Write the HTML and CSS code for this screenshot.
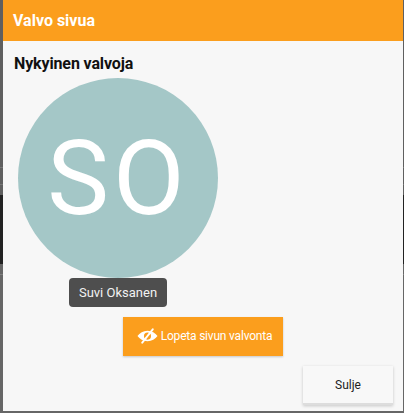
FILE: index.html
```html
<!DOCTYPE html>
<html lang="fi">

<head>
    <meta charset="UTF-8">
    <meta name="viewport" content="width=device-width, initial-scale=1.0">
    <title>Valvo sivua</title>
    <link rel="stylesheet" href="styles.css">
</head>

<body>
    <div class="dialog">
        <header class="dialog-header">
            <h1 class="dialog-title">Valvo sivua</h1>
        </header>

        <div class="dialog-body">
            <h2 class="section-title">Nykyinen valvoja</h2>

            <div class="avatar">SO</div>
            <div class="name-tag">Suvi Oksanen</div>

            <button type="button" class="stop-btn">
                <svg class="stop-icon" viewBox="0 0 22 16" aria-hidden="true">
                    <path fill="currentColor" fill-rule="evenodd" d="M11 2.500C6.500 2.500 2.800 4.800 0.500 8c2.300 3.200 6 5.500 10.500 5.500S19.200 11.200 21.500 8C19.200 4.800 15.500 2.500 11 2.500zm0 1.900a3.700 3.700 0 1 1 0 7.400 3.700 3.700 0 0 1 0-7.400z"/>
                    <path fill="none" stroke="currentColor" stroke-width="2" stroke-linecap="round" d="M16.500 1 5.500 15"/>
                </svg>
                Lopeta sivun valvonta
            </button>
        </div>

        <footer class="dialog-footer">
            <button type="button" class="close-btn">Sulje</button>
        </footer>
    </div>
</body>

</html>
```

FILE: styles.css
```css
* {
    margin: 0;
    padding: 0;
    box-sizing: border-box;
}

html,
body {
    height: 100%;
    overflow: hidden;
}

body {
    font-family: Roboto, "Liberation Sans", sans-serif;
    background: linear-gradient(#5f5f5f 0, #5f5f5f 167px, #777 167px, #777 168px, #5f5f5f 168px, #5f5f5f 184px, #777 184px, #777 185px, #5f5f5f 185px, #5f5f5f 195px, #222 195px, #222 264px, #666 264px, #666 274px, #808080 274px, #808080 275px, #666 275px);
    padding: 0 1px 2px 3px;
}

.dialog {
    height: 411px;
    background: #f7f7f7;
    display: flex;
    flex-direction: column;
}

.dialog-header {
    height: 41px;
    background: #fb9e1d;
    padding: 0 10px;
    display: flex;
    align-items: center;
}

.dialog-title {
    font-size: 16px;
    font-weight: 700;
    color: #fff;
}

.dialog-body {
    flex: 1;
    padding: 13px 11px 0;
}

.section-title {
    font-size: 16px;
    font-weight: 700;
    line-height: 20px;
    letter-spacing: -0.13px;
    color: #111;
}

.avatar {
    width: 200px;
    height: 200px;
    margin: 4px 0 0 4px;
    border-radius: 50%;
    background: #a4c7c7;
    color: #fff;
    font-size: 104px;
    font-weight: 400;
    letter-spacing: 4px;
    display: flex;
    align-items: center;
    justify-content: center;
}

.name-tag {
    width: 98px;
    height: 29px;
    margin-left: 55px;
    background: #4e4e4e;
    border-radius: 4px;
    color: #f2f2f2;
    font-size: 13px;
    display: flex;
    align-items: center;
    justify-content: center;
}

.stop-btn {
    width: 160px;
    height: 39px;
    margin: 10px 0 0 109px;
    padding: 0 0 2px 3px;
    border: none;
    background: #fb9e1d;
    color: #fff;
    font-family: inherit;
    font-size: 12px;
    font-weight: 400;
    letter-spacing: -0.2px;
    box-shadow: 0 1px 2px rgba(0, 0, 0, 0.2);
    display: flex;
    align-items: center;
    justify-content: center;
    gap: 3px;
}

.stop-icon {
    width: 21px;
    height: 16px;
}

.dialog-footer {
    display: flex;
    justify-content: flex-end;
    padding: 0 10px 6px;
}

.close-btn {
    width: 90px;
    height: 39px;
    border: none;
    border-bottom: 2px solid #ddd;
    background: #f8f8f8;
    color: #222;
    font-family: inherit;
    font-size: 12px;
    box-shadow: 0 1px 3px rgba(0, 0, 0, 0.2);
}
```
